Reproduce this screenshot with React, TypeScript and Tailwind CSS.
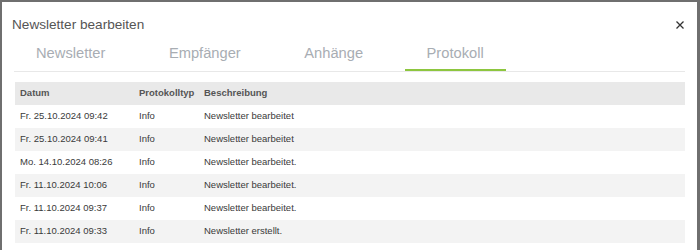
const TABS = ["Newsletter", "Empfänger", "Anhänge", "Protokoll"];

const ROWS = [
  { date: "Fr. 25.10.2024 09:42", type: "Info", text: "Newsletter bearbeitet" },
  { date: "Fr. 25.10.2024 09:41", type: "Info", text: "Newsletter bearbeitet" },
  { date: "Mo. 14.10.2024 08:26", type: "Info", text: "Newsletter bearbeitet." },
  { date: "Fr. 11.10.2024 10:06", type: "Info", text: "Newsletter bearbeitet." },
  { date: "Fr. 11.10.2024 09:37", type: "Info", text: "Newsletter bearbeitet." },
  { date: "Fr. 11.10.2024 09:33", type: "Info", text: "Newsletter erstellt." },
];

export default function App() {
  return (
    <div className="h-[250px] w-[700px] overflow-hidden bg-[#6f6f6f] pl-[2px] pt-[2px] font-['Liberation_Sans',Arial,sans-serif]">
      <div className="h-[260px] w-[695px] bg-white">
        <div className="flex h-[42px] items-center justify-between pl-[10px] pr-[13px] pt-[3px]">
          <h2 className="text-[13.6px] leading-[18px] text-[#555]">Newsletter bearbeiten</h2>
          <button type="button" aria-label="Schließen">
            <svg width="8" height="8" viewBox="0 0 8 8" className="block">
              <path d="M0.5 0.5 L7.5 7.5 M7.5 0.5 L0.5 7.5" stroke="#333" strokeWidth="1.3" />
            </svg>
          </button>
        </div>

        <div className="mx-[12px] flex gap-[19.5px] border-b border-[#e8e8e8]">
          {TABS.map((tab) => (
            <div
              key={tab}
              className={
                tab === "Protokoll"
                  ? "border-b-2 border-[#8dc63f] px-[22px] pb-[7px] text-[14.7px] leading-[18px] text-[#a8adb3]"
                  : "px-[22px] pb-[9px] text-[14.7px] leading-[18px] text-[#a8adb3]"
              }
            >
              {tab}
            </div>
          ))}
        </div>

        <table className="ml-[13px] mt-[10px] w-[670px] table-fixed border-collapse text-left text-[9.5px] text-[#3a3a3a]">
          <colgroup>
            <col className="w-[119px]" />
            <col className="w-[65px]" />
            <col />
          </colgroup>
          <thead>
            <tr className="h-[23px] bg-[#e9e9e9]">
              <th className="pl-[5px] font-bold text-[#555]">Datum</th>
              <th className="pl-[5px] font-bold text-[#555]">Protokolltyp</th>
              <th className="pl-[5px] font-bold text-[#555]">Beschreibung</th>
            </tr>
          </thead>
          <tbody>
            {ROWS.map((row, i) => (
              <tr key={i} className={i % 2 === 1 ? "h-[23px] bg-[#f3f3f3]" : "h-[23px] bg-white"}>
                <td className="pl-[5px]">{row.date}</td>
                <td className="pl-[5px]">{row.type}</td>
                <td className="pl-[5px]">{row.text}</td>
              </tr>
            ))}
          </tbody>
        </table>
      </div>
    </div>
  );
}
